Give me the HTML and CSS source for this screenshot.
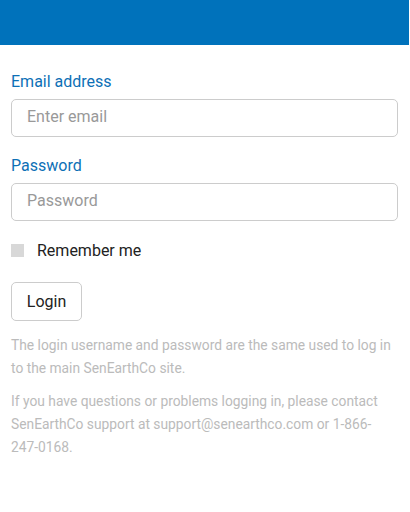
FILE: index.html
```html
<!DOCTYPE html>
<html>
<head>
<meta charset="utf-8">
<link rel="stylesheet" href="styles.css">
</head>
<body>
<header class="topbar"></header>
<main class="content">
  <form class="login-form">
    <label class="field-label" for="email">Email address</label>
    <input class="field-input" id="email" type="email" placeholder="Enter email">
    <label class="field-label second" for="pw">Password</label>
    <input class="field-input" id="pw" type="password" placeholder="Password">
    <div class="remember">
      <span class="checkbox"></span>
      <span class="remember-text">Remember me</span>
    </div>
    <button class="login-btn" type="button">Login</button>
  </form>
  <p class="note">The login username and password are the same used to log in to the main SenEarthCo site.</p>
  <p class="note second-note">If you have questions or problems logging in, please contact SenEarthCo support at support@senearthco.com or 1-866-247-0168.</p>
</main>
</body>
</html>
```
FILE: styles.css
```css
html, body {
  margin: 0;
  padding: 0;
  background: #ffffff;
  font-family: Roboto, "Noto Sans", sans-serif;
}
.topbar {
  height: 45px;
  width: 409px;
  background: #0072bb;
}
.content {
  padding: 27px 12px 0 11px;
}
.login-form {
  display: flex;
  flex-direction: column;
  align-items: flex-start;
}
.field-label {
  font-size: 16px;
  line-height: 19px;
  color: #0d70b6;
  margin-bottom: 8px;
}
.field-label.second {
  margin-top: 19px;
}
.field-input {
  box-sizing: border-box;
  width: 387px;
  height: 38px;
  border: 1px solid #cccccc;
  border-radius: 5px;
  padding: 0 15px 3px 15px;
  font-family: Roboto, sans-serif;
  font-size: 16px;
  color: #333;
  outline: none;
}
.field-input::placeholder {
  color: #999999;
}
.remember {
  display: flex;
  align-items: center;
  margin-top: 23px;
  height: 13px;
}
.checkbox {
  width: 13px;
  height: 13px;
  background: #d8d8d8;
}
.remember-text {
  margin-left: 13px;
  font-size: 16px;
  color: #222222;
}
.login-btn {
  margin-top: 25px;
  box-sizing: border-box;
  width: 71px;
  height: 39px;
  background: #ffffff;
  border: 1px solid #cccccc;
  border-radius: 5px;
  font-family: Roboto, sans-serif;
  font-size: 16px;
  color: #222222;
  padding: 0 0 1px 0;
}
.note {
  margin: 13px 0 0 0;
  font-size: 13.8px;
  line-height: 23px;
  color: #bbbbbb;
}
.second-note {
  margin-top: 10px;
}
```
